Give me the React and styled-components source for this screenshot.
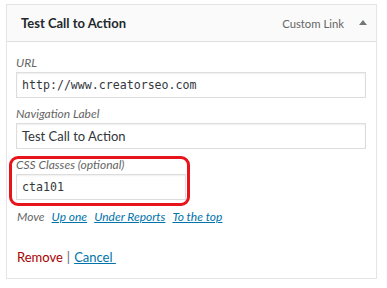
import React from 'react';
import styled, {createGlobalStyle} from 'styled-components';

const GlobalStyle = createGlobalStyle`
  html, body {
    margin: 0;
    padding: 0;
    background: #ffffff;
  }
  body {
    font-family: Lato, "Open Sans", "Liberation Sans", sans-serif;
    color: #23282d;
  }
`
const StyledDivPage = styled.div`
  padding: 4px 0 0 6px;
`
const StyledDivPanel = styled.div`
  width: 369px;
  height: 273px;
  border: 1px solid #e5e5e5;
  box-shadow: 0 1px 1px rgba(0, 0, 0, 0.04);
  display: flex;
  flex-direction: column;
`
const StyledDivHeader = styled.div`
  height: 36px;
  display: flex;
  align-items: center;
  padding: 0 9px 0 14px;
  background: #fafafa;
  border-bottom: 1px solid #dfdfdf;
`
const StyledSpanTitle = styled.span`
  flex-grow: 1;
  font-size: 13px;
  font-weight: 700;
  color: #23282d;
`
const StyledSpanType = styled.span`
  font-size: 11.3px;
  color: #666;
  margin-right: 15px;
`
const StyledSpanArrow = styled.span`
  width: 0;
  height: 0;
  margin-top: -2px;
  border-left: 4px solid transparent;
  border-right: 4px solid transparent;
  border-bottom: 5px solid #72777c;
`
const StyledDivBody = styled.div`
  padding: 12px 10px 0 9px;
  display: flex;
  flex-direction: column;
`
const StyledDivField = styled.div`
  display: flex;
  flex-direction: column;
  margin-bottom: 7px;
  width: ${props => props.$width || '350px'};
  position: relative;
`
const StyledDivHighlight = styled.div`
  position: absolute;
  left: -7px;
  top: 0;
  right: -4px;
  bottom: -6px;
  border: 3px solid #e8141b;
  border-radius: 9px;
  pointer-events: none;
`
const StyledLabel = styled.label`
  font-size: 12px;
  font-style: italic;
  color: #666;
  line-height: 17px;
  margin-bottom: 1px;
`
const StyledDivInput = styled.div`
  height: 24px;
  border: 1px solid #ddd;
  box-shadow: inset 0 1px 2px rgba(0, 0, 0, 0.07);
  display: flex;
  align-items: center;
  padding-left: 5px;
  font-size: ${props => props.$mono ? '11.6px' : '13px'};
  font-family: ${props => props.$mono ? '"DejaVu Sans Mono", "Liberation Mono", monospace' : 'Lato, "Open Sans", sans-serif'};
  color: #32373c;
`
const StyledDivMove = styled.div`
  display: flex;
  gap: 7px;
  line-height: 17px;
  margin-top: 1px;
  font-size: 12px;
  font-style: italic;
  color: #666;
  padding-left: 1px;
`
const StyledA = styled.a`
  color: ${props => props.$danger ? '#a00' : '#0073aa'};
  text-decoration: ${props => props.$danger ? 'none' : 'underline'};
  cursor: pointer;
`
const StyledDivActions = styled.div`
  display: flex;
  align-items: center;
  gap: 4px;
  line-height: 16px;
  margin-top: 24px;
  padding-left: 1px;
  font-size: 13px;
  color: #666;
`

export default class App extends React.Component {
  render() {
    return (
      <StyledDivPage>
        <GlobalStyle/>
        <StyledDivPanel>

          <StyledDivHeader>
            <StyledSpanTitle>Test Call to Action</StyledSpanTitle>
            <StyledSpanType>Custom Link</StyledSpanType>
            <StyledSpanArrow/>
          </StyledDivHeader>

          <StyledDivBody>
            <StyledDivField>
              <StyledLabel>URL</StyledLabel>
              <StyledDivInput $mono>http://www.creatorseo.com</StyledDivInput>
            </StyledDivField>
            <StyledDivField>
              <StyledLabel>Navigation Label</StyledLabel>
              <StyledDivInput>Test Call to Action</StyledDivInput>
            </StyledDivField>
            <StyledDivField $width="170px">
              <StyledLabel>CSS Classes (optional)</StyledLabel>
              <StyledDivInput $mono>cta101</StyledDivInput>
              <StyledDivHighlight/>
            </StyledDivField>

            <StyledDivMove>
              <span>Move</span>
              <StyledA>Up one</StyledA>
              <StyledA>Under Reports</StyledA>
              <StyledA>To the top</StyledA>
            </StyledDivMove>

            <StyledDivActions>
              <StyledA $danger>Remove</StyledA>
              <span>|</span>
              <StyledA>Cancel&nbsp;</StyledA>
            </StyledDivActions>
          </StyledDivBody>

        </StyledDivPanel>
      </StyledDivPage>
    );
  }
}
